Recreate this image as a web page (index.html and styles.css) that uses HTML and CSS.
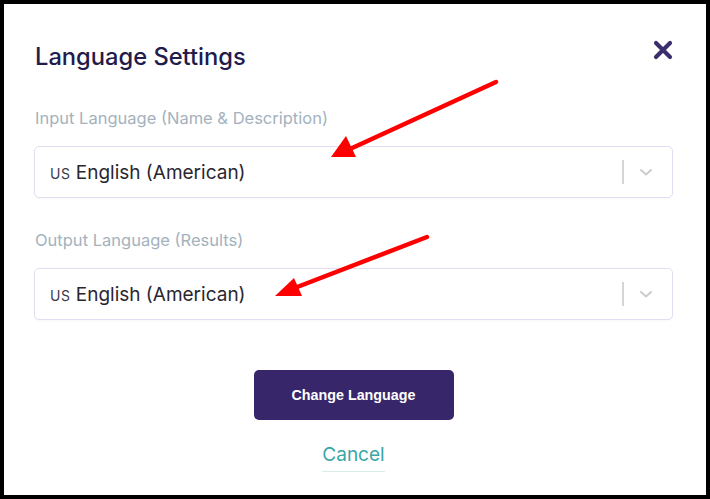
FILE: index.html
```html
<!DOCTYPE html>
<html>
<head>
<meta charset="utf-8">
<link rel="stylesheet" href="styles.css">
</head>
<body>
<div class="modal">
  <div class="header">
    <h1 class="title">Language Settings</h1>
    <button class="close" aria-label="Close">
      <svg width="20" height="20" viewBox="0 0 20 20"><path d="M3 3 L17 17 M17 3 L3 17" stroke="#3a2f6c" stroke-width="4.2" stroke-linecap="round"/></svg>
    </button>
  </div>
  <div class="field">
    <label class="label">Input Language (Name &amp; Description)</label>
    <div class="select">
      <span class="value"><span class="flag">US</span> English (American)</span>
      <span class="indicators">
        <span class="sep"></span>
        <svg class="chev" width="20" height="20" viewBox="0 0 20 20"><path d="M5 8 L10 12.5 L15 8" fill="none" stroke="#cccccc" stroke-width="2" stroke-linecap="round" stroke-linejoin="round"/></svg>
      </span>
    </div>
  </div>
  <div class="field second">
    <label class="label">Output Language (Results)</label>
    <div class="select">
      <span class="value"><span class="flag">US</span> English (American)</span>
      <span class="indicators">
        <span class="sep"></span>
        <svg class="chev" width="20" height="20" viewBox="0 0 20 20"><path d="M5 8 L10 12.5 L15 8" fill="none" stroke="#cccccc" stroke-width="2" stroke-linecap="round" stroke-linejoin="round"/></svg>
      </span>
    </div>
  </div>
  <div class="actions">
    <button class="primary">Change Language</button>
    <a class="cancel">Cancel</a>
  </div>
  <svg class="arrows" width="710" height="499" viewBox="0 0 710 499">
    <line x1="496" y1="82" x2="350" y2="149" stroke="#ff0000" stroke-width="4.5" stroke-linecap="round"/>
    <polygon points="331,157 346,136 356,157" fill="#ff0000"/>
    <line x1="427" y1="237" x2="292" y2="289" stroke="#ff0000" stroke-width="4.5" stroke-linecap="round"/>
    <polygon points="275,296 294,278 302,296" fill="#ff0000"/>
  </svg>
</div>
</body>
</html>
```

FILE: styles.css
```css
* { box-sizing: border-box; }
html, body { margin: 0; padding: 0; }
body {
  width: 710px;
  height: 499px;
  font-family: "Inter", "Open Sans", sans-serif;
  background: #000;
}
.modal {
  position: relative;
  width: 710px;
  height: 499px;
  background: #fff;
  border: 4px solid #000;
  padding: 32px 33px 0 30px;
  display: flex;
  flex-direction: column;
}
.modal > * { flex-shrink: 0; }
.header {
  display: flex;
  justify-content: space-between;
  align-items: flex-start;
}
.title {
  margin: 5px 0 0 1px;
  font-size: 23.7px;
  line-height: 32px;
  font-weight: 500;
  color: #221b4b;
}
.close {
  border: 0;
  background: none;
  padding: 0;
  margin: 4px 0 0 0;
  width: 20px;
  height: 20px;
}
.field { margin-top: 35px; }
.field.second { margin-top: 32px; }
.label {
  display: block;
  margin-left: 1px;
  font-size: 16.5px;
  line-height: 20px;
  color: #a3b2bd;
}
.select {
  margin-top: 18px;
  height: 52px;
  border: 1px solid #e2ddf0;
  border-radius: 5px;
  display: flex;
  align-items: center;
  justify-content: space-between;
  padding: 0 16px 0 15px;
  box-shadow: 0 1px 2px rgba(0,0,0,0.03);
}
.value {
  font-size: 19px;
  color: #2a2630;
}
.flag {
  font-size: 14px;
  letter-spacing: 0.5px;
  color: #3b3a4a;
}
.indicators {
  display: flex;
  align-items: center;
  gap: 12px;
}
.sep {
  width: 2px;
  height: 24px;
  background: #d5d5d5;
}
.chev { display: block; }
.actions {
  display: flex;
  flex-direction: column;
  align-items: center;
  margin-top: 50px;
}
.primary {
  width: 200px;
  height: 50px;
  border: 0;
  border-radius: 5px;
  background: #37276a;
  color: #fff;
  font-family: "Liberation Sans", Arial, sans-serif;
  font-weight: 700;
  font-size: 14.3px;
}
.cancel {
  margin-top: 22px;
  font-size: 19px;
  line-height: 26px;
  color: #3aa6a6;
  padding-bottom: 3px;
  border-bottom: 1px solid #d8ecea;
}
.arrows {
  position: absolute;
  left: -4px;
  top: -4px;
  pointer-events: none;
}
```
